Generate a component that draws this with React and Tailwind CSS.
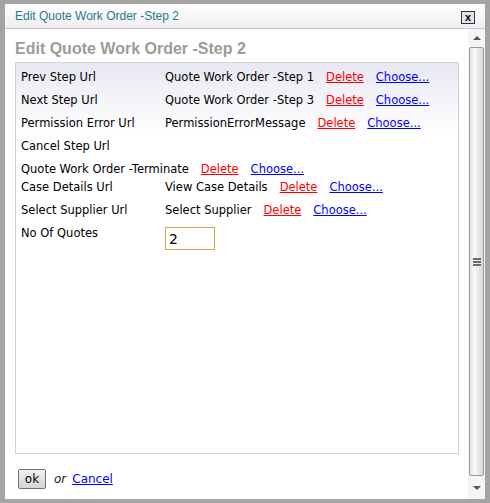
const rows = [
  { label: "Prev Step Url", value: "Quote Work Order -Step 1" },
  { label: "Next Step Url", value: "Quote Work Order -Step 3" },
  { label: "Permission Error Url", value: "PermissionErrorMessage" },
];

const LinkPair = () => (
  <>
    <a href="#" className="ml-3 text-[#ff0000] underline">Delete</a>
    <a href="#" className="ml-3 text-[#0000ff] underline">Choose...</a>
  </>
);

const Row = ({ label, value, className = "mt-[6px]" }) => (
  <div className={`flex h-[17px] items-center whitespace-nowrap ${className}`}>
    <div className="w-[144px] shrink-0">{label}</div>
    <div>{value}</div>
    <LinkPair />
  </div>
);

const Scrollbar = () => (
  <div className="flex w-[17px] shrink-0 flex-col bg-[#f4f4f4]">
    <div className="flex h-[18px] items-center justify-center">
      <div className="h-0 w-0 border-x-[4px] border-b-[4px] border-x-transparent border-b-[#555]" />
    </div>
    <div className="mx-[1px] flex flex-1 items-center justify-center rounded-[2px] border border-[#9a9a9a] bg-[linear-gradient(to_right,#e2e2e2,#fafafa_35%,#d6d6d6)]">
      <div className="flex flex-col gap-[1px]">
        <div className="h-[2px] w-[8px] bg-[#6b6b6b]" />
        <div className="h-[2px] w-[8px] bg-[#6b6b6b]" />
        <div className="h-[2px] w-[8px] bg-[#6b6b6b]" />
      </div>
    </div>
    <div className="flex h-[23px] items-center justify-center">
      <div className="h-0 w-0 border-x-[4px] border-t-[4px] border-x-transparent border-t-[#555]" />
    </div>
  </div>
);

export default function App() {
  return (
    <div className="h-[503px] w-[490px] bg-[#a4a4a4] pb-[4px] pl-[5px] pr-[5px] pt-[4px]">
      <div className="flex h-full flex-col bg-white">
        <div className="flex h-[25px] shrink-0 items-center justify-between border-b border-[#c8c8c8] bg-[linear-gradient(to_bottom,#ffffff,#eeeeee)] pl-[10px] pr-[10px]">
          <span className="font-['Liberation_Sans',sans-serif] text-[12px] text-[#2a7a8c]">
            Edit Quote Work Order -Step 2
          </span>
          <button className="mt-[2px] flex h-[13px] w-[14px] items-center justify-center border border-[#333] bg-[#dde6ee] font-['Liberation_Sans',sans-serif] text-[11px] font-bold leading-none text-black">
            x
          </button>
        </div>
        <div className="flex min-h-0 flex-1">
          <div className="flex min-h-0 flex-1 flex-col pl-[10px] pr-[9px]">
            <h1 className="mt-[11px] font-['Liberation_Sans',sans-serif] text-[16px] font-bold leading-[18px] text-[#a19a95]">
              Edit Quote Work Order -Step 2
            </h1>
            <div className="mt-[4px] h-[392px] shrink-0 border border-[#d4d4d4] bg-[linear-gradient(to_bottom,#e8e8f3,#ffffff_70px)] px-[5px] pt-[6px] font-['DejaVu_Sans',sans-serif] text-[11.5px] text-black">
              {rows.map((r, i) => (
                <Row key={r.label} label={r.label} value={r.value} className={i === 0 ? "" : "mt-[6px]"} />
              ))}
              <div className="mt-[6px] flex h-[17px] items-center">Cancel Step Url</div>
              <div className="mt-[6px] flex h-[17px] items-center whitespace-nowrap">
                <span>Quote Work Order -Terminate</span>
                <LinkPair />
              </div>
              <Row label="Case Details Url" value="View Case Details" className="mt-[1px]" />
              <Row label="Select Supplier Url" value="Select Supplier" />
              <div className="mt-[6px] flex items-start">
                <div className="flex h-[17px] w-[144px] items-center">No Of Quotes</div>
                <input
                  defaultValue="2"
                  className="mt-[2px] h-[23px] w-[50px] border border-[#d2a84e] px-[3px] text-[14px] text-black outline-none"
                />
              </div>
            </div>
            <div className="mt-[15px] flex items-center font-['DejaVu_Sans',sans-serif] text-[12px]">
              <button className="ml-[3px] h-[20px] w-[28px] rounded-[2px] border border-[#707070] bg-[linear-gradient(to_bottom,#f2f2f2,#d4d4d4)] text-[12px] leading-none text-black">
                ok
              </button>
              <span className="ml-[8px] italic text-[#222]">or</span>
              <a href="#" className="ml-[6px] text-[#0000ff] underline">Cancel</a>
            </div>
          </div>
          <Scrollbar />
        </div>
      </div>
    </div>
  );
}
